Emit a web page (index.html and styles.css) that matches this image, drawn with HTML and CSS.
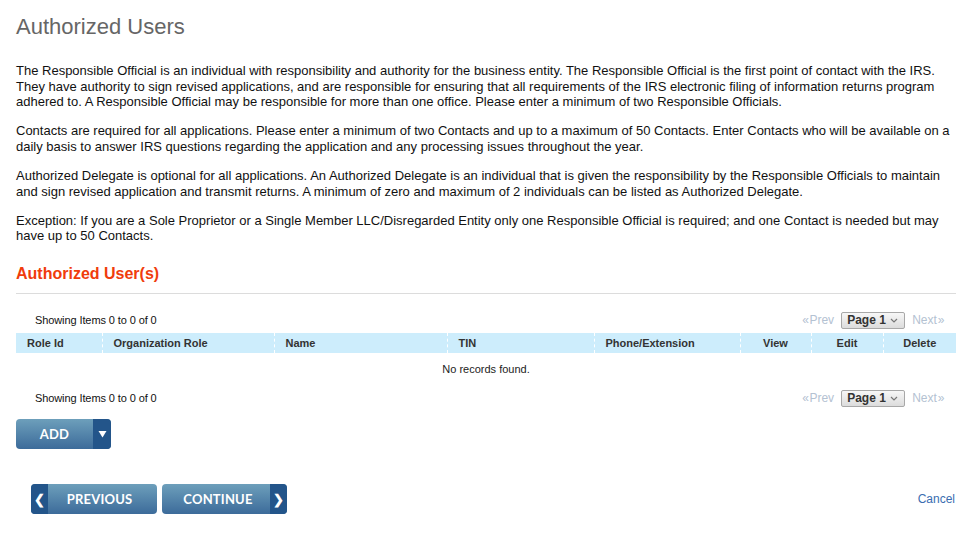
FILE: index.html
```html
<!DOCTYPE html>
<html lang="en">
<head>
<meta charset="utf-8">
<title>Authorized Users</title>
<link rel="stylesheet" href="styles.css">
</head>
<body>
<div class="page">
  <h1 class="title">Authorized Users</h1>
  <p class="para">The Responsible Official is an individual with responsibility and authority for the business entity. The Responsible Official is the first point of contact with the IRS. They have authority to sign revised applications, and are responsible for ensuring that all requirements of the IRS electronic filing of information returns program adhered to. A Responsible Official may be responsible for more than one office. Please enter a minimum of two Responsible Officials.</p>
  <p class="para">Contacts are required for all applications. Please enter a minimum of two Contacts and up to a maximum of 50 Contacts. Enter Contacts who will be available on a daily basis to answer IRS questions regarding the application and any processing issues throughout the year.</p>
  <p class="para">Authorized Delegate is optional for all applications. An Authorized Delegate is an individual that is given the responsibility by the Responsible Officials to maintain and sign revised application and transmit returns. A minimum of zero and maximum of 2 individuals can be listed as Authorized Delegate.</p>
  <p class="para">Exception: If you are a Sole Proprietor or a Single Member LLC/Disregarded Entity only one Responsible Official is required; and one Contact is needed but may have up to 50 Contacts.</p>

  <h2 class="section-title">Authorized User(s)</h2>
  <div class="rule"></div>

  <div class="pager pager-top">
    <span class="count">Showing Items 0 to 0 of 0</span>
    <div class="pager-nav">
      <span class="pager-link"><span class="chev">&#171;</span>Prev</span>
      <span class="page-select"><span class="page-label">Page 1</span><svg class="caret" width="8" height="5" viewBox="0 0 8 5"><path d="M1 1 L4 4 L7 1" fill="none" stroke="#777" stroke-width="1.2"/></svg></span>
      <span class="pager-link">Next<span class="chev">&#187;</span></span>
    </div>
  </div>

  <table class="grid">
    <colgroup>
      <col class="c1"><col class="c2"><col class="c3"><col class="c4"><col class="c5"><col class="c6"><col class="c7"><col class="c8">
    </colgroup>
    <thead>
      <tr>
        <th>Role Id</th>
        <th>Organization Role</th>
        <th>Name</th>
        <th>TIN</th>
        <th>Phone/Extension</th>
        <th class="center">View</th>
        <th class="center">Edit</th>
        <th class="center">Delete</th>
      </tr>
    </thead>
    <tbody>
      <tr><td colspan="8" class="empty">No records found.</td></tr>
    </tbody>
  </table>

  <div class="pager pager-bottom">
    <span class="count">Showing Items 0 to 0 of 0</span>
    <div class="pager-nav">
      <span class="pager-link"><span class="chev">&#171;</span>Prev</span>
      <span class="page-select"><span class="page-label">Page 1</span><svg class="caret" width="8" height="5" viewBox="0 0 8 5"><path d="M1 1 L4 4 L7 1" fill="none" stroke="#777" stroke-width="1.2"/></svg></span>
      <span class="pager-link">Next<span class="chev">&#187;</span></span>
    </div>
  </div>

  <div class="add-row">
    <div class="btn btn-add">
      <span class="btn-label add-label">ADD</span>
      <span class="btn-cap"><svg width="9" height="8" viewBox="0 0 9 8"><path d="M0.5 1 H8.5 L4.5 7.5 Z" fill="#fff"/></svg></span>
    </div>
  </div>

  <div class="nav-row">
    <div class="nav-buttons">
      <div class="btn btn-prev">
        <span class="btn-cap">&#10094;</span>
        <span class="btn-label prev-label">PREVIOUS</span>
      </div>
      <div class="btn btn-next">
        <span class="btn-label next-label">CONTINUE</span>
        <span class="btn-cap">&#10095;</span>
      </div>
    </div>
    <a class="cancel" href="#">Cancel</a>
  </div>
</div>
</body>
</html>
```

FILE: styles.css
```css
html, body {
  margin: 0;
  padding: 0;
  background: #fff;
}

.page {
  width: 940px;
  padding: 14px 18px 0 16px;
  font-family: "Liberation Sans", Arial, sans-serif;
  color: #111;
}

.title {
  margin: 0 0 24px 0;
  font-size: 22px;
  line-height: 25px;
  font-weight: normal;
  color: #666;
}

.para {
  margin: 0 0 13.5px 0;
  font-size: 13px;
  line-height: 15.6px;
}

.section-title {
  margin: 21px 0 10px 0;
  font-size: 16px;
  line-height: 18px;
  font-weight: bold;
  color: #f03c0c;
}

.rule {
  height: 1px;
  background: #dcdcdc;
}

.pager {
  display: flex;
  align-items: center;
  justify-content: space-between;
  height: 19px;
  padding: 0 11px 0 19px;
  font-size: 11px;
}

.pager-top {
  margin-top: 17px;
}

.pager-bottom {
  margin-top: 4px;
}

.count {
  color: #111;
  letter-spacing: -0.1px;
}

.pager-nav {
  display: flex;
  align-items: center;
  gap: 7px;
}

.pager-link {
  color: #b4c2d2;
  font-size: 12px;
}

.chev {
  font-size: 12px;
  letter-spacing: -0.5px;
  margin: 0 1px;
}

.page-select {
  display: inline-flex;
  align-items: center;
  justify-content: space-between;
  box-sizing: border-box;
  width: 64px;
  height: 17px;
  padding: 0 6px 0 5px;
  border: 1px solid #a8a8a8;
  border-radius: 2px;
  background: linear-gradient(#f7f7f7, #dcdcdc);
}

.page-label {
  font-size: 12px;
  font-weight: bold;
  color: #333;
}

.caret {
  display: block;
}

.grid {
  width: 940px;
  margin-top: 3px;
  border-collapse: collapse;
  table-layout: fixed;
  font-size: 11px;
}

.c1 { width: 86px; }
.c2 { width: 172px; }
.c3 { width: 173px; }
.c4 { width: 147px; }
.c5 { width: 146px; }
.c6 { width: 71px; }
.c7 { width: 72px; }
.c8 { width: 73px; }

.grid th {
  height: 20px;
  padding: 0 0 0 11px;
  background: #cdedfc;
  color: #333;
  font-weight: bold;
  text-align: left;
  border-left: 1px dashed #fff;
}

.grid th:first-child {
  border-left: none;
}

.grid th.center {
  text-align: center;
  padding: 0;
}

.empty {
  height: 32px;
  padding: 0;
  text-align: center;
  color: #222;
}

.add-row {
  margin-top: 11px;
  display: flex;
}

.btn {
  display: flex;
  height: 30px;
  border-radius: 4px;
  overflow: hidden;
  background: linear-gradient(#6d9fbb, #3c6b9a);
  color: #fff;
  font-family: Lato, "Liberation Sans", sans-serif;
  font-weight: bold;
  font-size: 13px;
  letter-spacing: 0.2px;
}

.btn-label {
  display: flex;
  align-items: center;
  justify-content: center;
}

.btn-cap {
  display: flex;
  align-items: center;
  justify-content: center;
  width: 17px;
  background: #23558a;
  font-size: 13px;
}

.btn-add {
  width: 95px;
}

.add-label {
  width: 77px;
}

.btn-add .btn-cap {
  width: 18px;
}

.nav-row {
  margin-top: 35px;
  display: flex;
  align-items: center;
  justify-content: space-between;
  padding-left: 15px;
}

.nav-buttons {
  display: flex;
  gap: 5px;
}

.btn-prev {
  width: 126px;
}

.prev-label {
  flex: 1;
  padding-right: 6px;
}

.btn-next {
  width: 125px;
}

.next-label {
  flex: 1;
  padding-left: 4px;
}

.cancel {
  font-size: 12px;
  color: #3a6db0;
  text-decoration: none;
  margin-right: 1px;
}
```
